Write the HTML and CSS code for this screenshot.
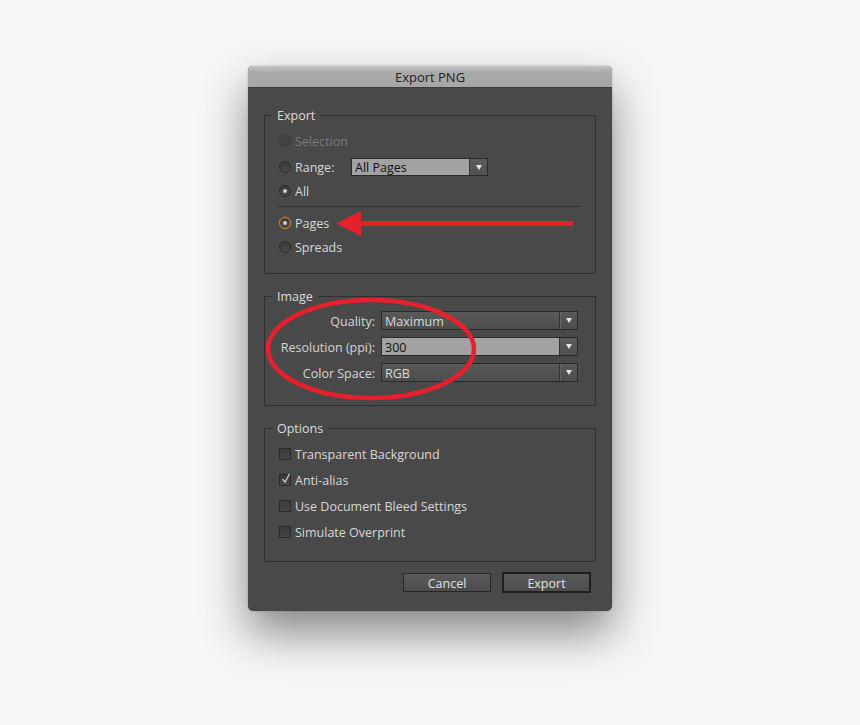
FILE: index.html
```html
<!DOCTYPE html>
<html>
<head>
<meta charset="utf-8">
<link rel="stylesheet" href="styles.css">
</head>
<body>
<div class="dialog">
  <div class="titlebar">Export PNG</div>
  <div class="content">
    <fieldset class="group export">
      <legend>Export</legend>
      <div class="row disabled"><span class="radio"></span><span>Selection</span></div>
      <div class="row range"><span class="radio"></span><span class="rlabel">Range:</span>
        <div class="select light range-select"><span class="val">All Pages</span><span class="arrow"><i></i></span></div>
      </div>
      <div class="row"><span class="radio on"></span><span>All</span></div>
      <div class="sep"></div>
      <div class="row pages"><span class="radio on focus"></span><span>Pages</span></div>
      <div class="row"><span class="radio"></span><span>Spreads</span></div>
    </fieldset>

    <fieldset class="group image">
      <legend>Image</legend>
      <div class="grid">
        <span class="glabel">Quality:</span>
        <div class="select dark"><span class="val">Maximum</span><span class="arrow"><i></i></span></div>
        <span class="glabel">Resolution (ppi):</span>
        <div class="select light"><span class="val">300</span><span class="arrow"><i></i></span></div>
        <span class="glabel">Color Space:</span>
        <div class="select dark"><span class="val">RGB</span><span class="arrow"><i></i></span></div>
      </div>
    </fieldset>

    <fieldset class="group options">
      <legend>Options</legend>
      <div class="crow"><span class="check"></span><span>Transparent Background</span></div>
      <div class="crow"><span class="check"><svg width="12" height="12" viewBox="0 0 12 12"><path d="M2.5 6.2 L5 9.2 L9.6 0.8" fill="none" stroke="#d0d0d0" stroke-width="1.3"/></svg></span><span>Anti-alias</span></div>
      <div class="crow"><span class="check"></span><span>Use Document Bleed Settings</span></div>
      <div class="crow"><span class="check"></span><span>Simulate Overprint</span></div>
    </fieldset>

    <div class="buttons">
      <button class="btn">Cancel</button>
      <button class="btn default">Export</button>
    </div>
  </div>

  <svg class="annot" width="364" height="545" viewBox="0 0 364 545">
    <ellipse cx="123" cy="283" rx="103" ry="49" fill="none" stroke="#e8202e" stroke-width="4.5"/>
    <rect x="110" y="155" width="215" height="5" fill="#e8202e"/>
    <polygon points="88,157.5 113,145 113,170" fill="#e8202e"/>
  </svg>
</div>
</body>
</html>
```

FILE: styles.css
```css
html, body {
  margin: 0;
  padding: 0;
}
body {
  background: #f6f6f6;
  width: 860px;
  height: 725px;
  overflow: hidden;
  font-family: "Open Sans", "Liberation Sans", sans-serif;
  font-size: 12.5px;
}
.dialog {
  position: relative;
  margin: 66px 0 0 248px;
  width: 364px;
  background: #494949;
  border-radius: 5px;
  box-shadow: 0 22px 45px rgba(0, 0, 0, 0.45), 0 0 2px rgba(0, 0, 0, 0.25);
}
.titlebar {
  height: 22px;
  line-height: 23px;
  text-align: center;
  font-size: 13px;
  color: #1e1e1e;
  background: linear-gradient(#c6c6c6, #aaaaaa 30%, #a6a6a6);
  border-radius: 5px 5px 0 0;
  border-bottom: 1px solid #3a3a3a;
  box-sizing: border-box;
}
.content {
  padding: 20px 16px 18px 16px;
  color: #d8d8d8;
}
.group {
  margin: 0;
  border: 1px solid #2f2f2f;
  padding: 0 14px;
  min-width: 0;
}
.group legend {
  padding: 1px 5px 0 5px;
  margin-left: -7px;
  line-height: 14px;
  height: 14px;
  box-sizing: border-box;
  color: #dcdcdc;
}
.export {
  padding-top: 7px;
  padding-bottom: 14px;
}
.image {
  margin-top: 15px;
  padding-top: 8px;
  padding-bottom: 23px;
}
.options {
  margin-top: 15px;
  padding-top: 6px;
  padding-bottom: 16px;
}
.row {
  height: 24px;
  display: flex;
  align-items: center;
}
.row > span:last-child, .rlabel, .crow > span:last-child {
  padding-top: 1px;
}
.glabel {
  padding-top: 2px;
}
.row.range {
  margin-top: 2px;
}
.row.pages {
  margin-top: 4px;
}
.row.disabled {
  color: #7a7a7a;
}
.sep {
  height: 1px;
  margin: 3px 0 0 -1px;
  background: #333333;
}
.radio {
  width: 12px;
  height: 12px;
  box-sizing: border-box;
  border-radius: 50%;
  border: 1px solid #2c2c2c;
  background: linear-gradient(#3a3a3a, #4a4a4a);
  margin-right: 4px;
  position: relative;
  flex: none;
}
.row > .radio {
  padding-top: 0;
}
.disabled .radio {
  border-color: #3c3c3c;
  background: #434343;
}
.radio.on::after {
  content: "";
  position: absolute;
  left: 3px;
  top: 3px;
  width: 4px;
  height: 4px;
  border-radius: 50%;
  background: #cfcfcf;
}
.radio.focus {
  border: 1px solid #d5822f;
  box-shadow: 0 0 0 0.5px #9a5a20;
}
.rlabel {
  width: 56px;
}
.select {
  display: flex;
  height: 18px;
  box-sizing: border-box;
  border: 1px solid #2a2a2a;
}
.range-select {
  width: 137px;
}
.select .val {
  flex: 1;
  padding-left: 3px;
  padding-top: 1px;
  line-height: 15px;
  white-space: nowrap;
}
.select .arrow {
  width: 17px;
  flex: none;
  display: flex;
  align-items: center;
  justify-content: center;
  background: linear-gradient(#5c5c5c, #505050);
  border-left: 1px solid #333;
}
.select .arrow i {
  width: 0;
  height: 0;
  border-left: 3.5px solid transparent;
  border-right: 3.5px solid transparent;
  border-top: 5px solid #e6e6e6;
}
.select.light .val {
  background: #a2a2a2;
  color: #111111;
}
.select.dark {
  background: linear-gradient(#595959, #4d4d4d);
}
.select.dark .val {
  color: #dadada;
}
.select.dark .arrow {
  background: transparent;
  border-left: 1px solid #333;
  box-shadow: inset 1px 0 0 #666;
}
.grid {
  display: grid;
  grid-template-columns: 96px 197px;
  grid-auto-rows: 19px;
  column-gap: 6px;
  row-gap: 7px;
  align-items: center;
}
.grid .select {
  height: 19px;
}
.grid .select .val {
  line-height: 15px;
  padding-top: 2px;
}
.glabel {
  text-align: right;
  white-space: nowrap;
  color: #d6d6d6;
}
.crow {
  height: 26px;
  display: flex;
  align-items: center;
}
.check {
  width: 12px;
  height: 12px;
  box-sizing: border-box;
  border: 1px solid #2a2a2a;
  background: linear-gradient(#3a3a3a, #464646);
  margin-right: 4px;
  position: relative;
  flex: none;
}
.check svg {
  position: absolute;
  left: 0;
  top: -2px;
}
.buttons {
  display: flex;
  justify-content: flex-end;
  align-items: center;
  gap: 11px;
  margin-top: 10px;
  padding-right: 5px;
}
.btn {
  font-family: "Open Sans", "Liberation Sans", sans-serif;
  font-size: 12.5px;
  color: #e0e0e0;
  width: 88px;
  height: 19px;
  padding: 2px 0 0 0;
  line-height: 15px;
  border: 1px solid #262626;
  background: linear-gradient(#5a5a5a, #4c4c4c);
  border-radius: 0;
  box-sizing: border-box;
}
.btn.default {
  width: 89px;
  height: 21px;
  border: 2px solid #1e1e1e;
}
.annot {
  position: absolute;
  left: 0;
  top: 0;
  pointer-events: none;
}
```
